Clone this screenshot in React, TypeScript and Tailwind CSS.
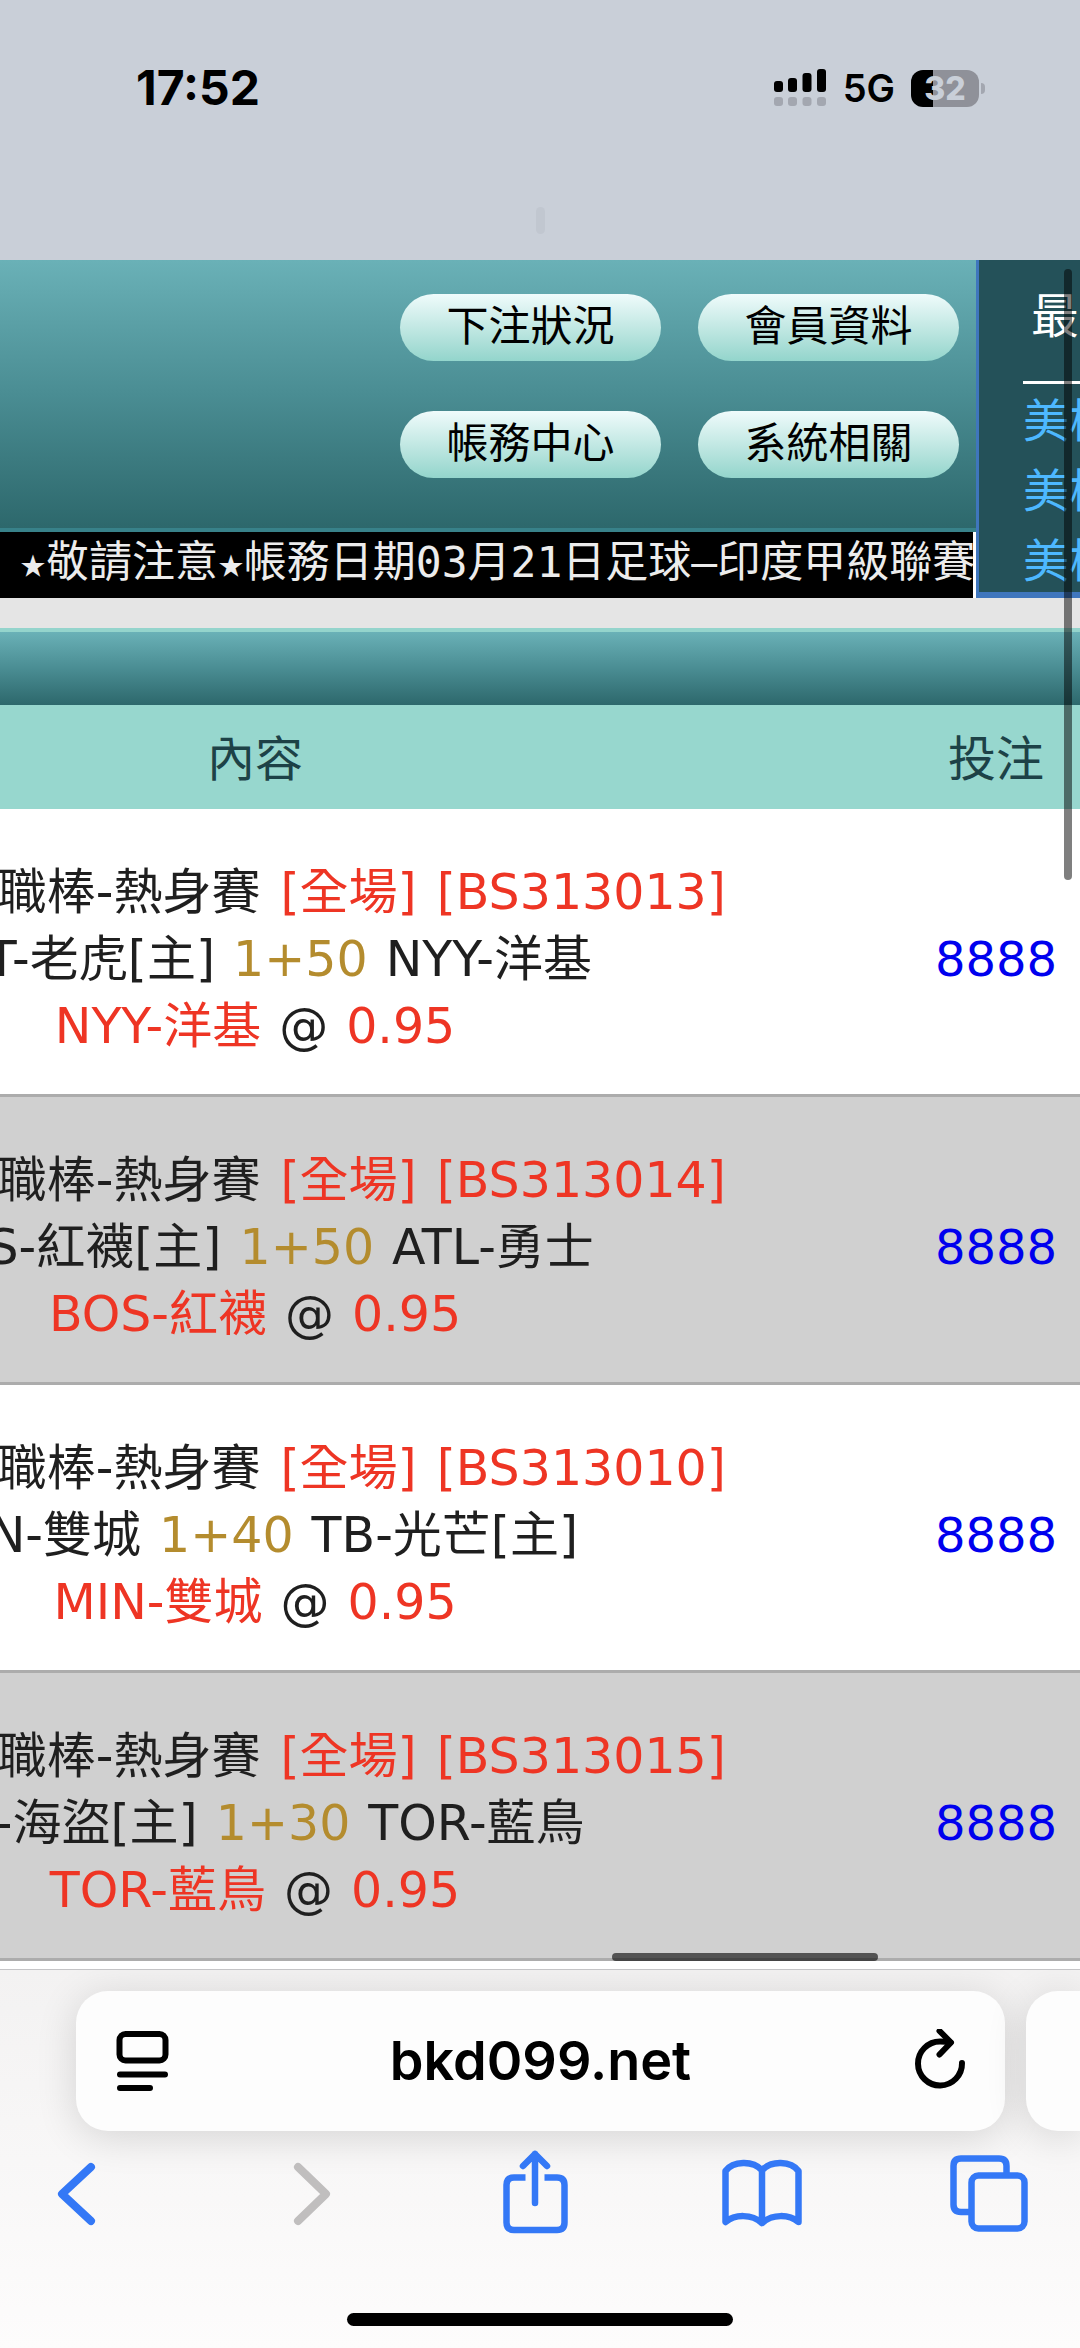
import type { ReactNode } from 'react';
import { clsx } from 'clsx';

interface Bet {
  id: string;
  home: string;
  handicap: string;
  away: string;
  pick: string;
  odds: string;
  stake: string;
}

const bets: Bet[] = [
  { id: 'BS313013', home: 'DET-老虎[主]', handicap: '1+50', away: 'NYY-洋基', pick: 'NYY-洋基', odds: '0.95', stake: '8888' },
  { id: 'BS313014', home: 'BOS-紅襪[主]', handicap: '1+50', away: 'ATL-勇士', pick: 'BOS-紅襪', odds: '0.95', stake: '8888' },
  { id: 'BS313010', home: 'MIN-雙城', handicap: '1+40', away: 'TB-光芒[主]', pick: 'MIN-雙城', odds: '0.95', stake: '8888' },
  { id: 'BS313015', home: 'PIT-海盜[主]', handicap: '1+30', away: 'TOR-藍鳥', pick: 'TOR-藍鳥', odds: '0.95', stake: '8888' },
];

const menu = ['下注狀況', '會員資料', '帳務中心', '系統相關'];
const news = ['美棒', '美棒', '美棒'];

function StatusBar() {
  return (
    <header className="h-[260px] bg-[#c9cfd8] font-['Inter',sans-serif]">
      <div className="flex items-center justify-between pt-[59px] pr-[95px] pl-[136px]">
        <span className="text-[48px] leading-[58px] font-bold text-black">17:52</span>
        <div className="flex items-center">
          <svg className="h-[38px] w-[54px]" viewBox="0 0 54 38" aria-hidden="true">
            <g fill="#000">
              <rect x="1" y="12" width="9" height="11" rx="3" />
              <rect x="15" y="9" width="9" height="14" rx="3" />
              <rect x="29.500" y="4" width="9" height="19" rx="3" />
              <rect x="44" y="0" width="9" height="23" rx="3" />
            </g>
            <g fill="#a3a7b0">
              <rect x="1" y="28" width="9" height="9" rx="3" />
              <rect x="15" y="28" width="9" height="9" rx="3" />
              <rect x="29.500" y="28" width="9" height="9" rx="3" />
              <rect x="44" y="28" width="9" height="9" rx="3" />
            </g>
          </svg>
          <span className="ml-4 text-[38px] leading-[38px] font-semibold text-black">5G</span>
          <div className="ml-4 flex h-[37px] w-[68px] items-center justify-center rounded-[12px] bg-linear-to-r from-black from-[32%] to-[#8f9199] to-[32%] text-[32px] leading-[37px] font-extrabold text-[#c9cfd8]">
            32
          </div>
          <div className="ml-[2px] h-[11px] w-1 rounded-r-full bg-[#a3a7b0]" />
        </div>
      </div>
      <div className="mx-auto mt-[90px] h-[27px] w-[9px] rounded-full bg-[#c1c7d0]" />
    </header>
  );
}

function SiteHeader() {
  return (
    <div className="flex">
      <div className="min-w-0 flex-1">
        <nav className="flex justify-end border-b-4 border-[#38828a] bg-linear-to-b from-[#6ab1b7] via-[#4a8d93] to-[#2d686c] pt-[34px] pr-[17px] pb-[50px]">
          <div className="grid grid-cols-2 gap-x-[37px] gap-y-[50px]">
            {menu.map((label) => (
              <button
                key={label}
                type="button"
                className="h-[67px] w-[261px] rounded-full bg-linear-to-b from-[#effbfb] to-[#93d5cc] pb-[2px] text-[42px] leading-[65px] text-black"
              >
                {label}
              </button>
            ))}
          </div>
        </nav>
        <p className="mr-[3px] h-[66px] overflow-hidden bg-black pl-5 font-['DejaVu_Sans_Mono','Noto_Sans_CJK_TC',monospace] text-[43px] leading-[60px] whitespace-nowrap text-[#ececec]">
          ★敬請注意★帳務日期03月21日足球–印度甲級聯賽
        </p>
      </div>
      <aside className="h-[338px] w-[104px] overflow-hidden border-b-[6px] border-l-[3px] border-[#3f76bd] bg-[#245159] pl-[44px] whitespace-nowrap">
        <h2 className="border-b-[3px] border-white pt-[26px] pb-[35px] pl-2 text-[48px] leading-[60px] text-white">最新</h2>
        <ul className="pt-[2px] text-[46px] leading-[70px] text-[#4db8ff]">
          {news.map((item, i) => (
            <li key={i}>
              <a href="#news">{item}</a>
            </li>
          ))}
        </ul>
      </aside>
    </div>
  );
}

function BetTable() {
  return (
    <div className="overflow-hidden">
      <div className="h-[77px] border-t-4 border-[#94d4cc] bg-linear-to-b from-[#6ab1b7] via-[#4a8d93] to-[#2d686c]" />
      {/* table is wider than the screen and scrolled to its right end */}
      <table className="-ml-[402px] w-[calc(100%+402px)] table-fixed border-collapse text-center text-[48px] leading-[67px]">
        <thead>
          <tr className="h-[104px] bg-[#97d7ce] text-[#1d4247]">
            <th className="pt-1 font-normal">內容</th>
            <th className="w-[168px] pt-1 font-normal">投注</th>
          </tr>
        </thead>
        <tbody>
          {bets.map((bet, i) => (
            <tr key={bet.id} className={clsx('border-b-[3px] border-[#acacac] text-[#1f1f1f]', i % 2 ? 'bg-[#d0d0d0]' : 'bg-white')}>
              <td className="pt-[50px] pb-[34px] text-[49px] leading-[67px] whitespace-nowrap">
                <div className="flex justify-center gap-[20px]">
                  <span>棒球-美國職棒-熱身賽</span>
                  <span className="text-[#ee3524]">[全場]</span>
                  <span className="text-[#ee3524]">[{bet.id}]</span>
                </div>
                <div className="flex justify-center gap-[18px]">
                  <span>{bet.home}</span>
                  <span className="text-[#b48c2e]">{bet.handicap}</span>
                  <span>{bet.away}</span>
                </div>
                <div className="flex justify-center gap-[18px]">
                  <span className="text-[#ee3524]">{bet.pick}</span>
                  <span>@</span>
                  <span className="text-[#ee3524]">{bet.odds}</span>
                </div>
              </td>
              <td className="pt-[50px] pb-[34px]">
                <a href={`#${bet.id}`} className="text-[#0000ee]">
                  {bet.stake}
                </a>
              </td>
            </tr>
          ))}
        </tbody>
      </table>
    </div>
  );
}

function ToolButton({ label, disabled, children }: { label: string; disabled?: boolean; children: ReactNode }) {
  return (
    <button type="button" aria-label={label} disabled={disabled} className={disabled ? 'text-[#c0bebe]' : 'text-[#3478f6]'}>
      <svg
        className="h-[90px] w-[84px]"
        viewBox="0 0 84 90"
        fill="none"
        stroke="currentColor"
        strokeWidth="6.5"
        strokeLinecap="round"
        strokeLinejoin="round"
      >
        {children}
      </svg>
    </button>
  );
}

function BrowserBar() {
  return (
    <footer className="overflow-hidden border-t border-[#c4c4c6] bg-linear-to-b from-[#f3f2f2] via-[#f8f7f7] to-[#fdfcfc] pt-[21px] pb-[22px]">
      <div className="flex gap-[21px] pl-[76px]">
        <div className="flex h-[140px] min-w-0 flex-1 items-center rounded-[32px] bg-[#fdfdfd] pr-[36px] pl-[36px] shadow-[0_6px_40px_rgba(0,0,0,0.14)]">
          <button type="button" aria-label="閱讀器" className="shrink-0">
            <svg className="h-[64px] w-[64px]" viewBox="0 0 64 64" fill="none" stroke="#000" strokeWidth="6" strokeLinecap="round">
              <rect x="7.500" y="5" width="46" height="26.500" rx="6" />
              <path d="M8 45.500H53M8 59H38" />
            </svg>
          </button>
          <input
            readOnly
            aria-label="網址"
            value="bkd099.net"
            className="min-w-0 flex-1 bg-transparent text-center font-['Inter',sans-serif] text-[54px] leading-[70px] font-semibold text-black outline-none"
          />
          <button type="button" aria-label="重新載入" className="shrink-0">
            <svg className="h-[64px] w-[64px]" viewBox="0 0 64 64" fill="none" stroke="#000" strokeWidth="6" strokeLinecap="round" strokeLinejoin="round">
              <path d="M57 34A22 22 0 1 1 35 12.500Q41 12.500 45.500 13.500" />
              <path d="M34.500 2L46 13.500L34.500 25.500" />
            </svg>
          </button>
        </div>
        <div className="h-[140px] w-[54px] rounded-l-[32px] bg-[#fdfdfd] shadow-[0_6px_40px_rgba(0,0,0,0.14)]" />
      </div>
      <div className="mt-[17px] flex justify-between pr-[49px] pl-[34px]">
        <ToolButton label="上一頁">
          <path strokeWidth="8" d="M57 19L28 46L57 73" />
        </ToolButton>
        <ToolButton label="下一頁" disabled>
          <path strokeWidth="8" d="M36 19L64 46L36 73" />
        </ToolButton>
        <ToolButton label="分享">
          <path strokeLinecap="butt" d="M34.500 29.500H23Q15.500 29.500 15.500 37V74.500Q15.500 82 23 82H66Q73.500 82 73.500 74.500V37Q73.500 29.500 66 29.500H53.500" />
          <path d="M44 55V6M32 18L44 6L56 18" />
        </ToolButton>
        <ToolButton label="書籤">
          <path d="M6.500 74V23C14 13 34 12 43 22.500C52 12 72 13 79.500 23V74C70 66 53 66 43 75C33 66 16 66 6.500 74ZM43 22.500V75" />
        </ToolButton>
        <ToolButton label="分頁">
          <path strokeLinecap="butt" d="M24 64H14Q6.500 64 6.500 56.500V18Q6.500 10.500 14 10.500H52Q59.500 10.500 59.500 18V27" />
          <rect x="24.500" y="27.500" width="53" height="53" rx="7" />
        </ToolButton>
      </div>
      <div className="mx-auto mt-[75px] h-[13px] w-[386px] rounded-full bg-black" />
    </footer>
  );
}

export default function App() {
  return (
    <div className="flex min-h-screen flex-col overflow-hidden bg-white font-['DejaVu_Sans','Noto_Sans_CJK_TC',sans-serif] [&_button]:block">
      <StatusBar />
      <main className="relative flex-1 pb-2">
        <SiteHeader />
        <div className="h-[30px] bg-[#e5e5e5]" />
        <BetTable />
        {/* scroll indicators float over the page */}
        <div className="absolute top-[9px] right-2 h-[611px] w-2 rounded-full bg-black/50" />
        <div className="absolute right-[202px] bottom-2 h-2 w-[266px] rounded-full bg-black/60" />
      </main>
      <BrowserBar />
    </div>
  );
}
